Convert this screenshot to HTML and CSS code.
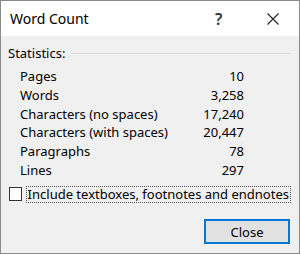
FILE: index.html
```html
<!DOCTYPE html>
<html lang="en">
<head>
    <meta charset="UTF-8">
    <title>Word Count</title>
    <link rel="stylesheet" href="styles.css">
</head>
<body>
    <div class="dialog">
        <div class="titlebar">
            <span class="title">Word Count</span>
            <span class="help">?</span>
            <span class="close-x">
                <svg width="12" height="12" viewBox="0 0 12 12">
                    <path d="M0.5 0.5 L11.5 11.5 M11.5 0.5 L0.5 11.5" stroke="#222" stroke-width="1.1" fill="none"/>
                </svg>
            </span>
        </div>
        <div class="content">
            <div class="group-head">
                <span>Statistics:</span>
                <div class="rule"></div>
            </div>
            <div class="stats">
                <span>Pages</span><span class="num">10</span>
                <span>Words</span><span class="num">3,258</span>
                <span>Characters (no spaces)</span><span class="num">17,240</span>
                <span>Characters (with spaces)</span><span class="num">20,447</span>
                <span>Paragraphs</span><span class="num">78</span>
                <span>Lines</span><span class="num">297</span>
            </div>
            <label class="check-row">
                <span class="box"></span>
                <span class="focus">Include textboxes, footnotes and endnotes</span>
            </label>
            <div class="buttons">
                <button class="btn">Close</button>
            </div>
        </div>
    </div>
</body>
</html>
```

FILE: styles.css
```css
body {
    margin: 0;
    font-family: "Noto Sans", "Open Sans", sans-serif;
    font-size: 13px;
    color: #000;
}

.dialog {
    width: 300px;
    height: 254px;
    box-sizing: border-box;
    border: 1px solid #8a8a8a;
    background-color: #f0f0f0;
    display: flex;
    flex-direction: column;
}

.titlebar {
    height: 35px;
    background-color: #fff;
    display: flex;
    align-items: center;
    padding-left: 9px;
}

.title {
    flex: 1;
    font-size: 14px;
    color: #000;
}

.help {
    font-size: 16px;
    font-weight: 600;
    width: 14px;
    margin-right: 38px;
    color: #333;
}

.close-x {
    display: flex;
    margin-right: 20px;
}

.content {
    padding: 9px 8px 0 7px;
    display: flex;
    flex-direction: column;
}

.group-head {
    display: flex;
    align-items: center;
    height: 16px;
}

.rule {
    flex: 1;
    height: 1px;
    background-color: #dcdcdc;
    margin-left: 6px;
}

.stats {
    width: 224px;
    display: grid;
    grid-template-columns: 1fr auto;
    grid-auto-rows: 18.7px;
    align-items: center;
    margin: 6px 0 0 12px;
}

.num {
    text-align: right;
}

.check-row {
    display: flex;
    align-items: center;
    margin-top: 6px;
    height: 18px;
}

.box {
    width: 14px;
    height: 14px;
    box-sizing: border-box;
    border: 1px solid #333;
    background-color: #fff;
    margin-left: 1px;
}

.focus {
    margin-left: 4px;
    padding: 0 1px;
    border: 1px dotted #555;
    line-height: 15px;
    white-space: nowrap;
}

.buttons {
    display: flex;
    justify-content: flex-end;
    margin-top: 16px;
}

.btn {
    width: 86px;
    height: 25px;
    border: 2px solid #0078d7;
    background-color: #e1e1e1;
    font-family: inherit;
    font-size: 13px;
    margin-right: 1px;
}
```
